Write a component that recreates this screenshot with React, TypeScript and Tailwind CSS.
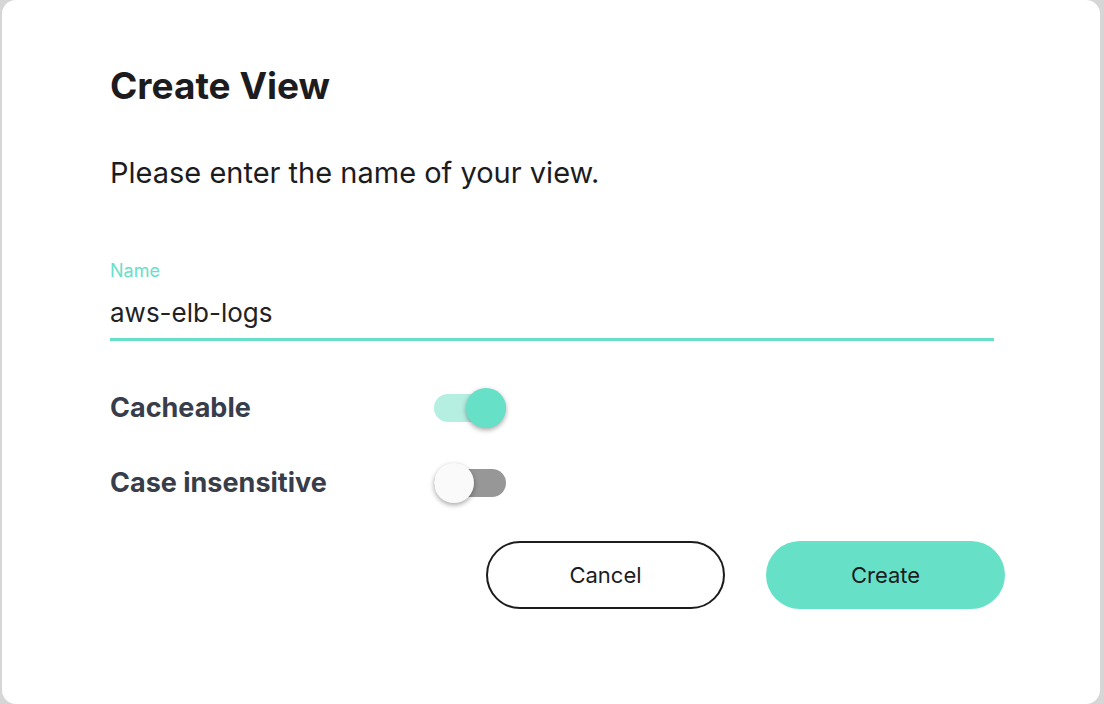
import React, { useState } from 'react';

const font = { fontFamily: 'Inter, "Noto Sans", sans-serif' };

const Toggle: React.FC<{ on: boolean; onChange: () => void }> = ({ on, onChange }) => (
  <button
    onClick={onChange}
    className={`relative w-[72px] h-[28px] rounded-full ${on ? 'bg-[#b4efe2]' : 'bg-[#979797]'}`}
  >
    <span
      className={`absolute top-[-6px] w-[40px] h-[40px] rounded-full shadow-[0_2px_5px_rgba(0,0,0,0.35)] ${
        on ? 'left-[32px] bg-[#67e0c8]' : 'left-0 bg-[#fafafa]'
      }`}
    />
  </button>
);

export default function App() {
  const [cacheable, setCacheable] = useState(true);
  const [caseInsensitive, setCaseInsensitive] = useState(false);
  const [name, setName] = useState('aws-elb-logs');

  return (
    <div className="w-[1104px] h-[704px] bg-[#d6d6d6] pl-[2px] pr-[4px]" style={font}>
      <div className="h-full bg-white rounded-[14px] pl-[108px] pr-[98px] pt-[64px]">
        <h1 className="text-[37px] font-bold text-[#1c1c1f] leading-[44px]">Create View</h1>
        <p className="mt-[47px] text-[29px] text-[#1c1c1f] leading-[36px]">Please enter the name of your view.</p>

        {/* Name field */}
        <div className="mt-[69px] w-[884px]">
          <label className="block text-[18px] text-[#67e0c8] leading-[22px]">Name</label>
          <input
            value={name}
            onChange={e => setName(e.target.value)}
            className="block w-full mt-[15px] pb-[9px] text-[26px] text-[#222] leading-[32px] outline-none border-b-[3px] border-[#67e0c8]"
          />
        </div>

        {/* Toggles */}
        <div className="mt-[51px] flex flex-col gap-[43px]">
          <div className="flex items-center h-[32px]">
            <span className="w-[324px] text-[27px] font-bold text-[#383d4b] leading-[32px]">Cacheable</span>
            <Toggle on={cacheable} onChange={() => setCacheable(!cacheable)} />
          </div>
          <div className="flex items-center h-[32px]">
            <span className="w-[324px] text-[27px] font-bold text-[#383d4b] leading-[32px]">Case insensitive</span>
            <Toggle on={caseInsensitive} onChange={() => setCaseInsensitive(!caseInsensitive)} />
          </div>
        </div>

        {/* Actions */}
        <div className="mt-[42px] flex justify-end gap-[41px] w-[895px]">
          <button className="w-[239px] h-[68px] rounded-full border-2 border-[#1c1c1f] text-[22px] text-[#1c1c1f]">
            Cancel
          </button>
          <button className="w-[239px] h-[68px] rounded-full bg-[#67e0c8] text-[22px] text-[#1c1c1f]">
            Create
          </button>
        </div>
      </div>
    </div>
  );
}
